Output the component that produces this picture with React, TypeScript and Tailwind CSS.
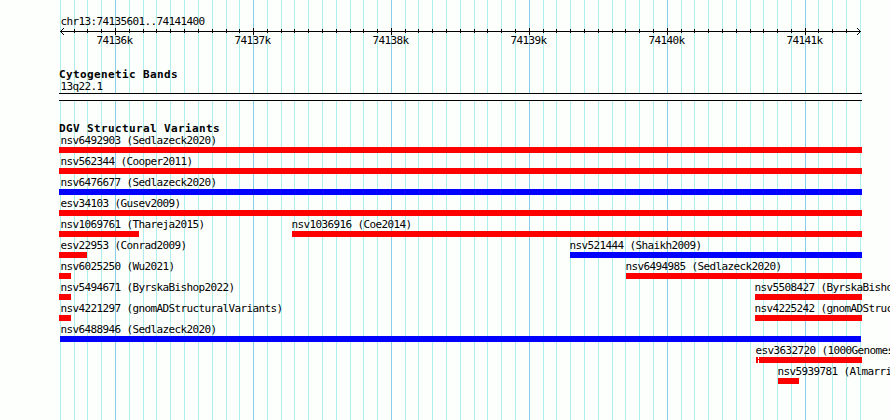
import React from 'react';

type Feature = {
  name: string;
  start: number;
  end: number;
  gain?: boolean;
  textX?: number;
};

// Pixel columns of the 100bp grid
const minorTicks = [
  60, 74, 87, 101, 129, 143, 156, 170, 184, 198, 212, 226, 239, 267, 281, 294, 308, 322, 336, 350, 363, 377,
  405, 418, 432, 446, 460, 474, 487, 501, 515, 543, 556, 570, 584, 598, 612, 625, 639, 653, 681, 694, 708,
  722, 736, 750, 763, 777, 791, 818, 832, 846, 860,
];

const majorTicks = [
  { x: 115, label: '74136k' },
  { x: 253, label: '74137k' },
  { x: 391, label: '74138k' },
  { x: 529, label: '74139k' },
  { x: 667, label: '74140k' },
  { x: 805, label: '74141k' },
];

// One array per row of the track
const rows: Feature[][] = [
  [{ name: 'nsv6492903 (Sedlazeck2020)', start: 59, end: 862 }],
  [{ name: 'nsv562344 (Cooper2011)', start: 59, end: 862 }],
  [{ name: 'nsv6476677 (Sedlazeck2020)', start: 59, end: 862, gain: true }],
  [{ name: 'esv34103 (Gusev2009)', start: 59, end: 862 }],
  [
    { name: 'nsv1069761 (Thareja2015)', start: 59, end: 139 },
    { name: 'nsv1036916 (Coe2014)', start: 292, end: 862, textX: 291.4 },
  ],
  [
    { name: 'esv22953 (Conrad2009)', start: 59, end: 87 },
    { name: 'nsv521444 (Shaikh2009)', start: 570, end: 862, gain: true, textX: 569.4 },
  ],
  [
    { name: 'nsv6025250 (Wu2021)', start: 59, end: 71 },
    { name: 'nsv6494985 (Sedlazeck2020)', start: 626, end: 862, textX: 625.4 },
  ],
  [
    { name: 'nsv5494671 (ByrskaBishop2022)', start: 59, end: 71 },
    { name: 'nsv5508427 (ByrskaBishop2022)', start: 755, end: 862, textX: 754.4 },
  ],
  [
    { name: 'nsv4221297 (gnomADStructuralVariants)', start: 59, end: 71 },
    { name: 'nsv4225242 (gnomADStructuralVariants)', start: 755, end: 862, textX: 754.4 },
  ],
  [{ name: 'nsv6488946 (Sedlazeck2020)', start: 60, end: 861, gain: true }],
  [{ name: 'esv3632720 (1000GenomesPhase3)', start: 756, end: 862, textX: 755.4 }],
  [{ name: 'nsv5939781 (Almarri2020)', start: 778, end: 799, textX: 777.4 }],
];

const GridLines: React.FC = () => (
  <svg className="absolute inset-0" width="890" height="420" shapeRendering="crispEdges">
    {minorTicks.map((x) => (
      <rect key={x} x={x} y="0" width="1" height="420" fill="#afeeee" />
    ))}
    {majorTicks.map(({ x }) => (
      <rect key={x} x={x} y="0" width="1" height="420" fill="#87ceeb" />
    ))}
  </svg>
);

const Ruler: React.FC = () => (
  <svg className="block" width="890" height="9" shapeRendering="crispEdges">
    <rect x="60" y="4" width="801" height="1" />
    {minorTicks.slice(1, -1).map((x) => (
      <rect key={x} x={x} y="2" width="1" height="4" />
    ))}
    {majorTicks.map(({ x }) => (
      <rect key={x} x={x} y="1" width="1" height="7" />
    ))}
    {/* arrow heads */}
    {[1, 2, 3].map((d) => (
      <g key={d}>
        <rect x={60 + d} y={4 - d} width="1" height="1" />
        <rect x={60 + d} y={4 + d} width="1" height="1" />
        <rect x={860 - d} y={4 - d} width="1" height="1" />
        <rect x={860 - d} y={4 + d} width="1" height="1" />
      </g>
    ))}
  </svg>
);

const FeatureItem: React.FC<{ feature: Feature }> = ({ feature }) => {
  const { name, start, end, gain, textX = 60.4 } = feature;
  return (
    <div className="col-start-1 row-start-1 min-w-0">
      <div className="h-[13px]" style={{ marginLeft: textX }}>
        {name}
      </div>
      <div
        className={gain ? 'h-1.5 bg-[#0000ff]' : 'h-1.5 bg-[#ff0000]'}
        style={{ marginLeft: start, width: end - start }}
      >
        {/* gap between the two segments of the call */}
        {name.startsWith('esv3632720') && (
          <svg className="block" width="6" height="6" shapeRendering="crispEdges">
            <rect x="2" y="0" width="1" height="2" fill="#fdfffc" />
            <rect x="2" y="3" width="1" height="3" fill="#fdfffc" />
          </svg>
        )}
      </div>
    </div>
  );
};

const App: React.FC = () => {
  return (
    <div className="relative h-[420px] w-[890px] overflow-hidden bg-[#fdfffc] font-['DejaVu_Sans_Mono',monospace] text-[11px] leading-[13px] tracking-[-0.622px] whitespace-pre text-black">
      <GridLines />
      <div className="relative flex flex-col">
        {/* Scale */}
        <div className="h-[27px] pt-[15px] pl-[60.4px]">chr13:74135601..74141400</div>
        <Ruler />
        <div className="flex h-[32px] gap-[102px] pl-[96.4px]">
          {majorTicks.map(({ x, label }) => (
            <span key={x} className="-mt-0.5 w-9">
              {label}
            </span>
          ))}
        </div>

        {/* Cytogenetic bands */}
        <h2 className="h-[13px] pl-[59px] font-bold tracking-[0.378px]">Cytogenetic Bands</h2>
        <div className="h-[12px] pl-[60.4px] leading-[12px]">13q22.1</div>
        <div className="ml-[59px] h-2 w-[803px] border-y border-black bg-white" />

        {/* Structural variants */}
        <h2 className="mt-[21px] h-[12px] pl-[59px] font-bold tracking-[0.378px]">DGV Structural Variants</h2>
        <div className="flex flex-col gap-0.5">
          {rows.map((row, i) => (
            <div key={i} className="grid h-[19px] grid-cols-[890px]">
              {row.map((feature) => (
                <FeatureItem key={feature.name} feature={feature} />
              ))}
            </div>
          ))}
        </div>
      </div>
    </div>
  );
};

export default App;
